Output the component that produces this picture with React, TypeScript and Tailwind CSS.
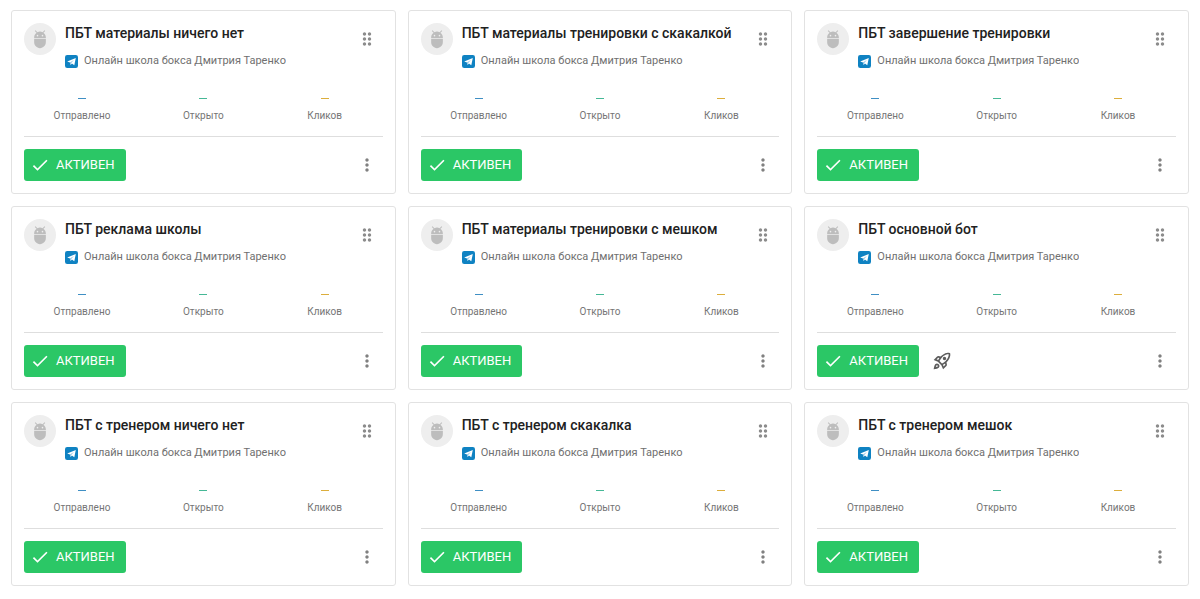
import {
  MdAdb,
  MdCheck,
  MdDragIndicator,
  MdMoreVert,
  MdOutlineRocketLaunch,
} from "react-icons/md";

type Bot = { title: string; launched?: boolean };

const channel = "Онлайн школа бокса Дмитрия Таренко";

const bots: Bot[] = [
  { title: "ПБТ материалы ничего нет" },
  { title: "ПБТ материалы тренировки с скакалкой" },
  { title: "ПБТ завершение тренировки" },
  { title: "ПБТ реклама школы" },
  { title: "ПБТ материалы тренировки с мешком" },
  { title: "ПБТ основной бот", launched: true },
  { title: "ПБТ с тренером ничего нет" },
  { title: "ПБТ с тренером скакалка" },
  { title: "ПБТ с тренером мешок" },
];

const stats = [
  { label: "Отправлено", bar: "bg-[#3f8fc4]" },
  { label: "Открыто", bar: "bg-[#45b896]" },
  { label: "Кликов", bar: "bg-[#dcae3c]" },
];

function TelegramIcon() {
  return (
    <svg viewBox="0 0 13 13" className="size-[13px] shrink-0" aria-hidden="true">
      <rect width="13" height="13" rx="2.2" fill="#0f82c2" />
      <path d="M2.2 6.5 10.8 3 9.3 10.2 6.9 8.5 5.6 9.9 5 7.6Z" fill="#fff" />
      <path d="M5 7.6 8.9 4.9 6.1 8 5.6 9.9Z" fill="#7fbbe0" />
    </svg>
  );
}

function BotCard({ title, launched }: Bot) {
  return (
    <article className="rounded-[3px] border border-[#e2e2e2] bg-white p-3">
      <header className="flex h-[60px] items-start">
        <span className="flex size-8 shrink-0 items-center justify-center rounded-full bg-[#eeeeee]">
          <MdAdb className="size-5 text-[#bdbdbd]" />
        </span>
        <div className="ml-[9px] min-w-0 grow">
          <h2 className="truncate text-[14px] leading-5 font-medium text-[#212121]">{title}</h2>
          <p className="mt-2 flex items-center gap-[6px] text-[11px] leading-5 text-[#707070]">
            <TelegramIcon />
            <span className="truncate">{channel}</span>
          </p>
        </div>
        <button type="button" aria-label="Переместить" className="mt-[6px] mr-[6px] flex w-5 shrink-0 justify-center">
          <MdDragIndicator className="size-5 text-[#8c8c8c]" />
        </button>
      </header>
      <ul className="flex h-[54px] justify-between border-b border-[#dedede] pt-[15px]">
        {stats.map(({ label, bar }) => (
          <li key={label} className="flex w-[116px] flex-col items-center">
            <span className={`h-px w-2 ${bar}`} />
            <span className="mt-[9px] text-[10px] leading-4 text-[#757575]">{label}</span>
          </li>
        ))}
      </ul>
      <footer className="mt-3 flex h-8 items-center">
        <button
          type="button"
          className="flex h-8 items-center gap-[6px] rounded-[3px] bg-[#2bc766] pr-[11px] pl-[6px] text-[13px] leading-5 text-white"
        >
          <MdCheck className="size-5" />
          АКТИВЕН
        </button>
        {launched && <MdOutlineRocketLaunch className="ml-[13px] size-5 text-[#5c5c5c]" />}
        <button type="button" aria-label="Меню" className="mr-[6px] ml-auto flex w-5 justify-center">
          <MdMoreVert className="size-5 text-[#808080]" />
        </button>
      </footer>
    </article>
  );
}

export default function App() {
  return (
    <main className="grid grid-cols-3 gap-3 bg-white px-[11px] pt-[10px] pb-3 font-[Roboto,sans-serif]">
      {bots.map((bot) => (
        <BotCard key={bot.title} {...bot} />
      ))}
    </main>
  );
}
